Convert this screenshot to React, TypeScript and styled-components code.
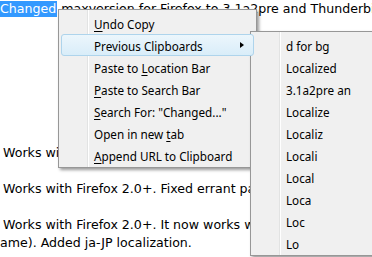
import styled, { createGlobalStyle } from 'styled-components';

const GlobalStyle = createGlobalStyle`
    html, body {
        margin: 0;
        padding: 0;
        background: #ffffff;
        overflow: hidden;
    }
`

const Page = styled.div`
    position: relative;
    width: 372px;
    height: 257px;
    overflow: hidden;
    background: #ffffff;
    font-family: "DejaVu Sans", Verdana, sans-serif;
    font-size: 12.6px;
    color: #000000;
`

const Para = styled.p<{ $gap: number }>`
    margin: 0 0 ${({ $gap }) => $gap}px 0;
    line-height: 18px;
    white-space: nowrap;
    text-indent: 3px;
`

const TopLine = styled(Para)`
    text-indent: 0;
    line-height: 17px;
`

const Selected = styled.span`
    background: #3399ff;
    color: #ffffff;
    padding: 0 1px 1px 0;
`

const Menu = styled.div<{ $left: number; $top: number; $width: number }>`
    position: absolute;
    left: ${({ $left }) => $left}px;
    top: ${({ $top }) => $top}px;
    width: ${({ $width }) => $width}px;
    box-sizing: border-box;
    padding: 2px 2px 1px 2px;
    background: #f0f0f0;
    border: 1px solid #979797;
    box-shadow: 2px 2px 3px rgba(0, 0, 0, 0.4);
    font-family: "Noto Sans", "Open Sans", sans-serif;
    font-size: 11.7px;
    color: #000000;

    &::before {
        content: '';
        position: absolute;
        top: 0;
        bottom: 0;
        left: 28px;
        width: 1px;
        background: #e2e3e3;
        border-right: 1px solid #ffffff;
    }
`

const Item = styled.div<{ $hover?: boolean }>`
    position: relative;
    display: flex;
    align-items: center;
    height: 22px;
    box-sizing: border-box;
    padding-left: 32px;
    padding-top: 1px;
    border: 1px solid ${({ $hover }) => ($hover ? '#aed4ec' : 'transparent')};
    border-radius: 3px;
    background: ${({ $hover }) => ($hover ? 'linear-gradient(#ecf6fc, #d9edf9)' : 'transparent')};
    white-space: nowrap;
    z-index: 1;

    u {
        text-decoration-thickness: 1px;
        text-underline-offset: 2px;
    }
`

const Arrow = styled.span`
    position: absolute;
    right: 9px;
    top: 7px;
    width: 0;
    height: 0;
    border-top: 3.5px solid transparent;
    border-bottom: 3.5px solid transparent;
    border-left: 4px solid #000000;
`

const clipboards = ['d for bg', 'Localized', '3.1a2pre an', 'Localize', 'Localiz', 'Locali', 'Local', 'Loca', 'Loc', 'Lo'];

export default function App() {
    return (
        <>
            <GlobalStyle />
            <Page>
                <TopLine $gap={127}>
                    <Selected>Changed</Selected> maxversion for Firefox to 3.1a2pre and Thunderbird
                </TopLine>
                <Para $gap={18}>Works with</Para>
                <Para $gap={18}>Works with Firefox 2.0+. Fixed errant parsing</Para>
                <Para $gap={0}>
                    Works with Firefox 2.0+. It now works with
                    <br />
                    ame). Added ja-JP localization.
                </Para>

                <Menu $left={58} $top={9} $width={199}>
                    <Item><span><u>U</u>ndo Copy</span></Item>
                    <Item $hover><span>Previous Clipboards</span><Arrow /></Item>
                    <Item><span>Paste to <u>L</u>ocation Bar</span></Item>
                    <Item><span><u>P</u>aste to Search Bar</span></Item>
                    <Item><span><u>S</u>earch For: "Changed..."</span></Item>
                    <Item><span>Open in new <u>t</u>ab</span></Item>
                    <Item><span><u>A</u>ppend URL to Clipboard</span></Item>
                </Menu>

                <Menu $left={250} $top={31} $width={140}>
                    {clipboards.map((text, index) => (
                        <Item key={index}><span>{text}</span></Item>
                    ))}
                </Menu>
            </Page>
        </>
    )
}
